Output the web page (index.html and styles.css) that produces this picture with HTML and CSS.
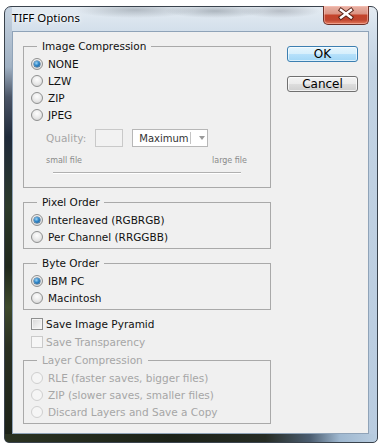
FILE: index.html
```html
<!DOCTYPE html>
<html>
<head>
<meta charset="utf-8">
<title>TIFF Options</title>
<link rel="stylesheet" href="styles.css">
</head>
<body>
<div class="window">
  <div class="titlebar">
    <span class="title">TIFF Options</span>
    <div class="close">
      <svg width="46" height="19" viewBox="0 0 46 19">
        <path d="M18 5 L28 12.5 M28 5 L18 12.5" stroke="#5a2418" stroke-width="4.4" stroke-linecap="square"/>
        <path d="M18 5 L28 12.5 M28 5 L18 12.5" stroke="#ffffff" stroke-width="2.4" stroke-linecap="square"/>
      </svg>
    </div>
  </div>
  <div class="client">
    <div class="left">
      <fieldset class="group g-compression">
        <legend>Image Compression</legend>
        <div class="radio checked"><span class="rb"></span>NONE</div>
        <div class="radio"><span class="rb"></span>LZW</div>
        <div class="radio"><span class="rb"></span>ZIP</div>
        <div class="radio"><span class="rb"></span>JPEG</div>
        <div class="quality">
          <span class="q-label">Quality:</span>
          <span class="q-box"></span>
          <span class="q-select"><span class="q-text">Maximum</span><span class="q-caret"></span><span class="q-arrow"></span></span>
        </div>
        <div class="slider-labels"><span>small file</span><span>large file</span></div>
        <div class="track"></div>
      </fieldset>
      <fieldset class="group">
        <legend>Pixel Order</legend>
        <div class="radio checked"><span class="rb"></span>Interleaved (RGBRGB)</div>
        <div class="radio"><span class="rb"></span>Per Channel (RRGGBB)</div>
      </fieldset>
      <fieldset class="group">
        <legend>Byte Order</legend>
        <div class="radio checked"><span class="rb"></span>IBM PC</div>
        <div class="radio"><span class="rb"></span>Macintosh</div>
      </fieldset>
      <div class="checks">
        <div class="check"><span class="cb"></span>Save Image Pyramid</div>
        <div class="check disabled"><span class="cb"></span>Save Transparency</div>
      </div>
      <fieldset class="group disabled g-layer">
        <legend>Layer Compression</legend>
        <div class="radio"><span class="rb"></span>RLE (faster saves, bigger files)</div>
        <div class="radio"><span class="rb"></span>ZIP (slower saves, smaller files)</div>
        <div class="radio"><span class="rb"></span>Discard Layers and Save a Copy</div>
      </fieldset>
    </div>
    <div class="buttons">
      <div class="btn ok">OK</div>
      <div class="btn">Cancel</div>
    </div>
  </div>
</div>
</body>
</html>
```
FILE: styles.css
```css
* { box-sizing: border-box; }
html, body { margin: 0; padding: 0; background: #ffffff; }
body {
  font-family: "DejaVu Sans", Verdana, sans-serif;
  font-size: 10.5px;
  color: #111;
}

.window {
  margin: 6px 0 0 4px;
  width: 374px;
  height: 437px;
  border: 1px solid #3a434d;
  border-radius: 7px 7px 5px 5px;
  padding: 0 8px 8px 7px;
  display: flex;
  flex-direction: column;
  background:
    linear-gradient(to right, #2b3322 0, #1c2218 45%, #262c24 70%, #4b5d70 82%, #9fb8d0 90%, #b9cde0 100%) left bottom / 100% 8px no-repeat,
    linear-gradient(to bottom, #c7d4e2 0, #9fb0c2 60px, #4b5566 90px, #1f2a3a 130px, #2c3a2a 200px, #20281c 260px, #3e4a2c 300px, #2a3022 340px, #1c2218 100%) left top / 7px 100% no-repeat,
    radial-gradient(ellipse 60px 8px at 130px 3px, rgba(120,130,140,0.45), transparent),
    radial-gradient(ellipse 50px 7px at 210px 4px, rgba(110,120,130,0.45), transparent),
    radial-gradient(ellipse 40px 7px at 275px 4px, rgba(120,125,135,0.4), transparent),
    linear-gradient(to bottom, #e4ebf2 0, #d3dfeb 24px, #c3d3e3 60px, #b9cce0 100%);
}

.titlebar {
  height: 24px;
  display: flex;
  align-items: flex-start;
}
.title {
  font-family: "Noto Sans", "Open Sans", sans-serif;
  font-size: 11.5px;
  line-height: 22px;
  color: #000;
  text-shadow: 0 0 6px #ffffff, 0 0 3px #ffffff;
}
.close {
  margin-left: auto;
  margin-top: -1px;
  width: 46px;
  height: 19px;
  border: 1px solid #6e3027;
  border-top: none;
  border-radius: 0 0 5px 5px;
  background: linear-gradient(to bottom, #e9b3a6 0, #dc9585 42%, #c4442b 52%, #c04630 78%, #e27a5c 100%);
  box-shadow: inset 0 0 0 1px rgba(255,200,190,0.5);
  overflow: hidden;
}
.close svg { display: block; margin: -1px 0 0 -1px; }

.client {
  flex: 1;
  background: #f0f0f0;
  border: 1px solid #8fa3b8;
  display: flex;
  padding: 7px 0 0 10px;
}
.left {
  width: 248px;
  display: flex;
  flex-direction: column;
}

.group {
  margin: 0;
  padding: 2px 6px 3px 7px;
  border: 1px solid #a9a9a9;
  min-width: 0;
}
.group + .group { margin-top: 7px; }
.group legend {
  margin-left: 6px;
  padding: 0 5px;
  line-height: 14px;
  font-size: 10.5px;
}
.group.disabled legend { color: #a6a6a6; }
.group.disabled { color: #a6a6a6; }

.radio {
  display: flex;
  align-items: center;
  height: 17px;
  gap: 5px;
  white-space: nowrap;
}
.rb {
  position: relative;
  flex: none;
  width: 12px;
  height: 12px;
  border-radius: 50%;
  border: 1px solid #8f9090;
  background: radial-gradient(circle at 50% 35%, #fdfdfd 0, #ececec 45%, #cfcfcf 100%);
}
.radio.checked .rb::after {
  content: "";
  position: absolute;
  left: 2px;
  top: 2px;
  width: 6px;
  height: 6px;
  border-radius: 50%;
  background: radial-gradient(circle at 40% 35%, #9fd6f6 0, #2f86c8 45%, #134f85 100%);
  box-shadow: 0 0 0 0.5px #24557f;
}
.group.disabled .rb {
  border-color: #cfcfcf;
  background: #f5f5f5;
}

.g-compression { padding-bottom: 13px; }
.quality {
  display: flex;
  align-items: center;
  height: 18px;
  margin-top: 6px;
  padding-left: 15px;
}
.q-label { color: #a6a6a6; }
.q-box {
  width: 28px;
  height: 18px;
  margin-left: 9px;
  border: 1px solid #c9c9c9;
  background: #f2f2f2;
}
.q-select {
  display: flex;
  align-items: center;
  width: 76px;
  height: 18px;
  margin-left: 9px;
  padding-left: 6px;
  border: 1px solid #b7b7b7;
  background: #ffffff;
  color: #333;
  font-size: 10px;
}
.q-caret {
  width: 1px;
  height: 12px;
  margin-left: 1px;
  background: #c4c4c4;
}
.q-arrow {
  margin-left: 8px;
  width: 0;
  height: 0;
  border-left: 3.5px solid transparent;
  border-right: 3.5px solid transparent;
  border-top: 4px solid #9a9a9a;
}
.slider-labels {
  display: flex;
  justify-content: space-between;
  margin-top: 9px;
  padding: 0 17px 0 15px;
  font-size: 8px;
  line-height: 10px;
  color: #8a8a8a;
}
.track {
  margin: 6px 0 0 22px;
  width: 188px;
  height: 2px;
  border-top: 1px solid #b0b0b0;
  border-bottom: 1px solid #ffffff;
}

.checks {
  display: flex;
  flex-direction: column;
  margin-top: 5px;
  padding-left: 8px;
}
.check {
  display: flex;
  align-items: center;
  height: 18px;
  gap: 3px;
}
.cb {
  flex: none;
  width: 12px;
  height: 12px;
  border: 1px solid #8e8f8f;
  background: linear-gradient(135deg, #d6d6d6 0, #ececec 60%, #f8f8f8 100%);
  box-shadow: inset 0 0 0 1px #f4f4f4;
}
.check.disabled { color: #a6a6a6; }
.check.disabled .cb {
  border-color: #cacaca;
  background: #f6f6f6;
  box-shadow: none;
}
.checks + .group { margin-top: 2px; }

.buttons {
  margin-left: 16px;
  margin-top: 7px;
  display: flex;
  flex-direction: column;
  gap: 14px;
}
.btn {
  width: 71px;
  height: 16px;
  border: 1px solid #707070;
  border-radius: 3px;
  background: linear-gradient(to bottom, #f3f3f3 0, #ebebeb 48%, #dddddd 52%, #cfcfcf 100%);
  box-shadow: inset 0 0 0 1px rgba(255,255,255,0.7);
  font-size: 12px;
  line-height: 14px;
  text-align: center;
  color: #000;
}
.btn.ok {
  border-color: #3c7fb1;
  background: linear-gradient(to bottom, #e5f5fd 0, #d6effc 48%, #b6e1fb 52%, #a2d7f6 100%);
  box-shadow: inset 0 0 0 1px rgba(255,255,255,0.6);
}
```
